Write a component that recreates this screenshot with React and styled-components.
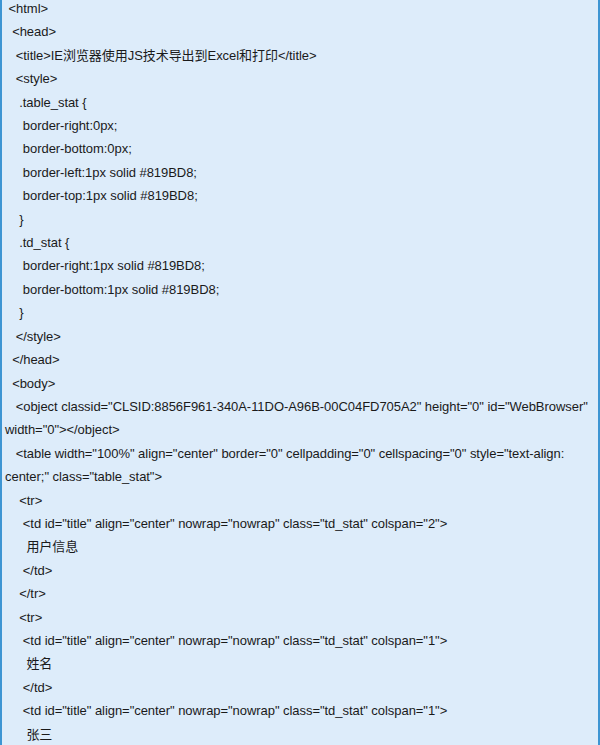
import React from "react";
import styled, { createGlobalStyle } from "styled-components";

const LINES = [
  " <html>",
  "  <head>",
  "   <title>IE浏览器使用JS技术导出到Excel和打印</title>",
  "   <style>",
  "    .table_stat {",
  "     border-right:0px;",
  "     border-bottom:0px;",
  "     border-left:1px solid #819BD8;",
  "     border-top:1px solid #819BD8;",
  "    }",
  "    .td_stat {",
  "     border-right:1px solid #819BD8;",
  "     border-bottom:1px solid #819BD8;",
  "    }",
  "   </style>",
  "  </head>",
  "  <body>",
  '   <object classid="CLSID:8856F961-340A-11DO-A96B-00C04FD705A2" height="0" id="WebBrowser" width="0"></object>',
  '   <table width="100%" align="center" border="0" cellpadding="0" cellspacing="0" style="text-align: center;" class="table_stat">',
  "    <tr>",
  '     <td id="title" align="center" nowrap="nowrap" class="td_stat" colspan="2">',
  "      用户信息",
  "     </td>",
  "    </tr>",
  "    <tr>",
  '     <td id="title" align="center" nowrap="nowrap" class="td_stat" colspan="1">',
  "      姓名",
  "     </td>",
  '     <td id="title" align="center" nowrap="nowrap" class="td_stat" colspan="1">',
  "      张三",
];

const GlobalStyle = createGlobalStyle`
  html, body {
    margin: 0;
    padding: 0;
    background: #ddecfa;
    overflow: hidden;
  }
`;

const CodeBox = styled.div`
  box-sizing: border-box;
  width: 600px;
  height: 745px;
  overflow: hidden;
  background: #ddecfa;
  border-left: 2px solid #3d95d3;
  border-right: 2px solid #3d95d3;
  padding: 0 1px 0 3px;
`;

const Code = styled.div`
  margin-top: -3px;
  font-family: "Liberation Sans", "Noto Sans CJK SC", sans-serif;
  font-size: 13px;
  letter-spacing: -0.05px;
  line-height: 23.4px;
  color: #1a1a1a;
`;

const Line = styled.div`
  white-space: pre-wrap;
  word-break: normal;
`;

function App() {
  return (
    <>
      <GlobalStyle />
      <CodeBox>
        <Code>
          {LINES.map((text, i) => (
            <Line key={i}>{text}</Line>
          ))}
        </Code>
      </CodeBox>
    </>
  );
}

export default App;
